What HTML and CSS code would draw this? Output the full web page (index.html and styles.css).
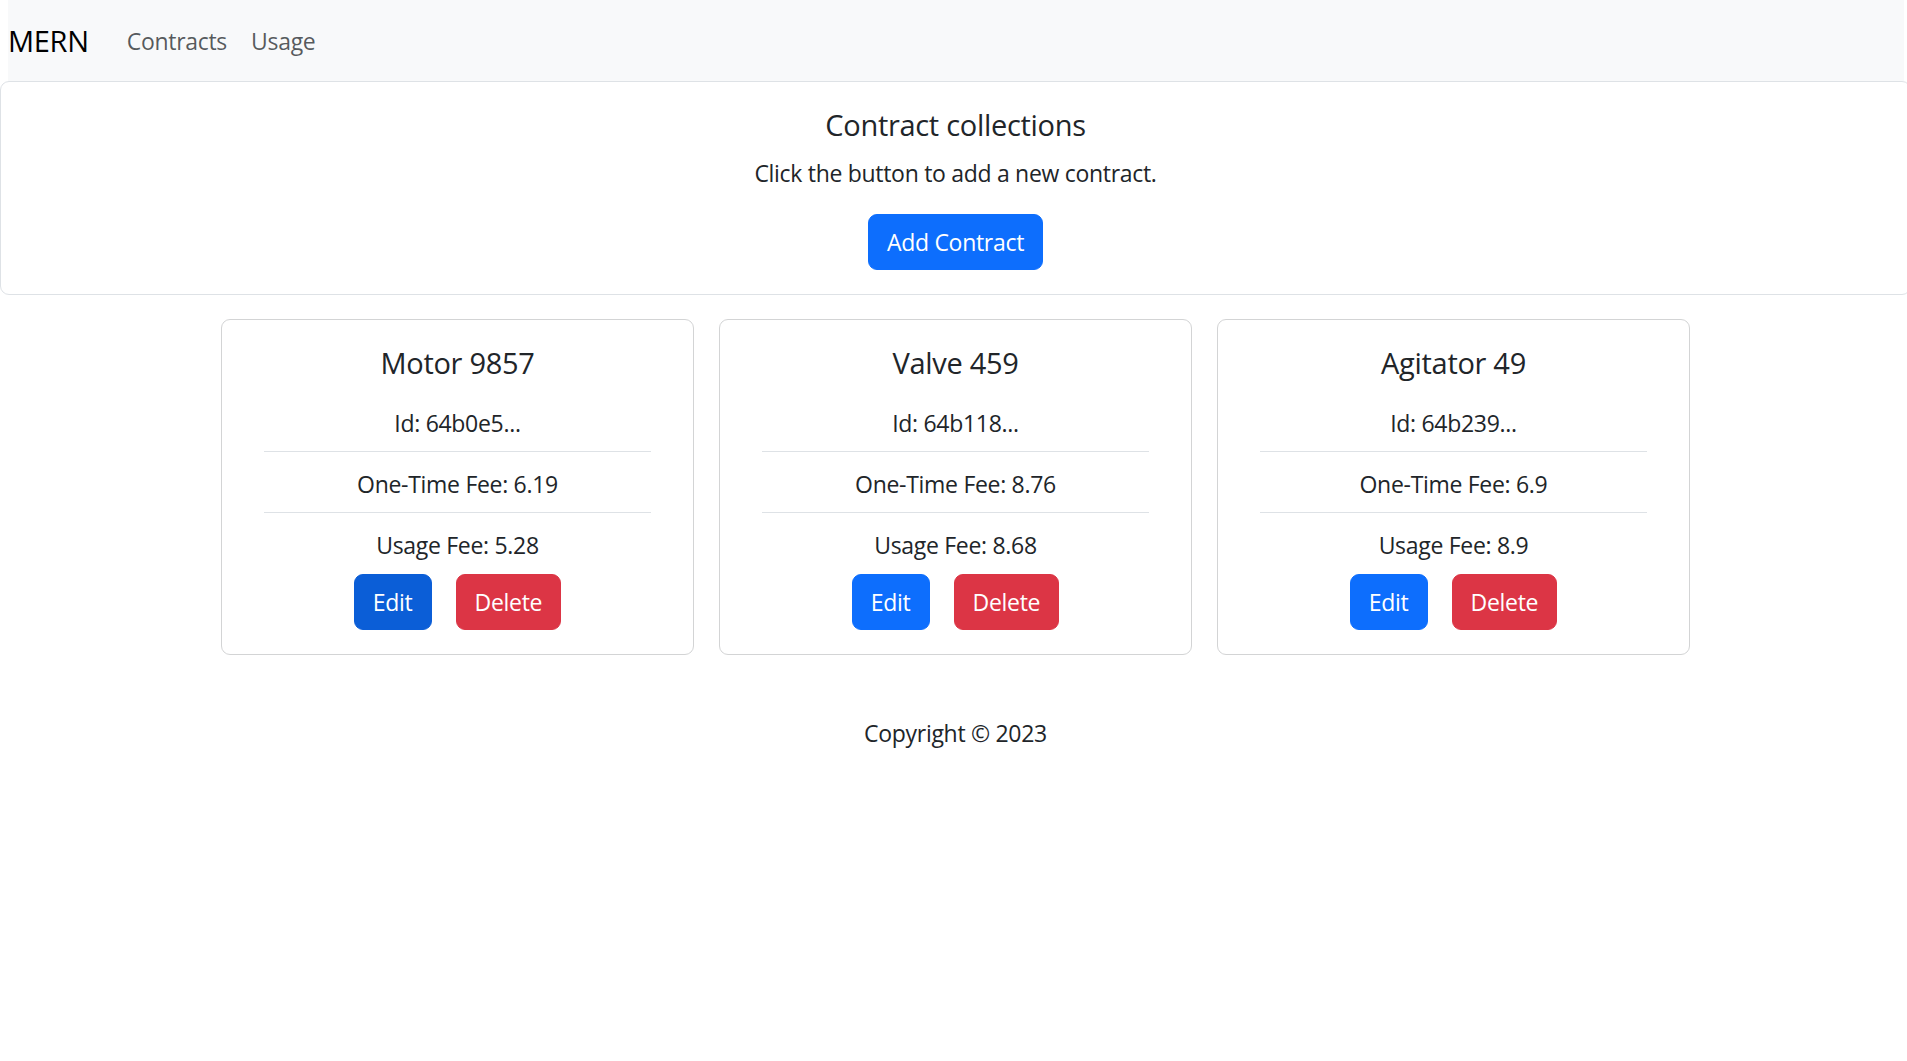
FILE: index.html
```html
<!DOCTYPE html>
<html lang="en">
<head>
<meta charset="utf-8">
<title>MERN</title>
<link rel="stylesheet" href="styles.css">
</head>
<body>
<nav class="navbar">
  <a class="brand" href="#">MERN</a>
  <a class="nav-link" href="#">Contracts</a>
  <a class="nav-link" href="#">Usage</a>
</nav>
<div class="page">
  <section class="hero">
    <h5 class="hero-title">Contract collections</h5>
    <p class="hero-text">Click the button to add a new contract.</p>
    <button class="btn btn-primary">Add Contract</button>
  </section>
  <div class="cards">
    <div class="card">
      <h5 class="card-title">Motor 9857</h5>
      <ul class="list">
        <li class="item">Id: 64b0e5...</li>
        <li class="item">One-Time Fee: 6.19</li>
        <li class="item item-last">Usage Fee: 5.28</li>
      </ul>
      <div class="actions">
        <button class="btn btn-primary btn-hover">Edit</button>
        <button class="btn btn-danger">Delete</button>
      </div>
    </div>
    <div class="card">
      <h5 class="card-title">Valve 459</h5>
      <ul class="list">
        <li class="item">Id: 64b118...</li>
        <li class="item">One-Time Fee: 8.76</li>
        <li class="item item-last">Usage Fee: 8.68</li>
      </ul>
      <div class="actions">
        <button class="btn btn-primary">Edit</button>
        <button class="btn btn-danger">Delete</button>
      </div>
    </div>
    <div class="card">
      <h5 class="card-title">Agitator 49</h5>
      <ul class="list">
        <li class="item">Id: 64b239...</li>
        <li class="item">One-Time Fee: 6.9</li>
        <li class="item item-last">Usage Fee: 8.9</li>
      </ul>
      <div class="actions">
        <button class="btn btn-primary">Edit</button>
        <button class="btn btn-danger">Delete</button>
      </div>
    </div>
  </div>
  <footer class="footer">Copyright © 2023</footer>
</div>
</body>
</html>
```
FILE: styles.css
```css
html, body {
  overflow-x: hidden;
}
body {
  margin: 0;
  font-family: "Open Sans", "Noto Sans", sans-serif;
  font-size: 23px;
  letter-spacing: -0.3px;
  line-height: 36px;
  color: #212529;
  background: #fff;
}
.navbar {
  display: flex;
  align-items: center;
  height: 81px;
  margin: 0 3px 0 8px;
  background: #f8f9fa;
}
.brand {
  font-size: 29px;
  line-height: 45px;
  color: #000;
  text-decoration: none;
  margin-left: 0;
  margin-right: 26px;
}
.nav-link {
  padding: 0 12px;
  color: rgba(33, 37, 41, 0.75);
  text-decoration: none;
}
.page {
  width: calc(100% + 4px);
}
.hero {
  box-sizing: border-box;
  border: 1px solid #dee2e6;
  border-radius: 9px;
  padding: 25px 24px 24px;
  text-align: center;
}
.hero-title, .card-title {
  font-size: 29px;
  line-height: 36px;
  font-weight: 400;
  margin: 0 0 12px;
}
.hero-text {
  margin: 12px 0 23px;
}
.btn {
  font-family: inherit;
  font-size: 23px;
  letter-spacing: -0.3px;
  line-height: 36px;
  padding: 9px 18px;
  border: 1px solid transparent;
  border-radius: 9px;
  color: #fff;
  cursor: pointer;
}
.btn-primary {
  background: #0d6efd;
  border-color: #0d6efd;
}
.btn-hover {
  background: #0b5ed7;
  border-color: #0b5ed7;
}
.btn-danger {
  background: #dc3545;
  border-color: #dc3545;
}
.cards {
  display: flex;
  justify-content: center;
  gap: 25px;
  margin-top: 24px;
}
.card {
  box-sizing: border-box;
  width: 473px;
  border: 1px solid #d3d4d5;
  border-radius: 9px;
  padding: 25px 24px 24px;
  text-align: center;
}
.card-title {
  margin-bottom: 10px;
}
.list {
  list-style: none;
  margin: 0 18px;
  padding: 0;
}
.item {
  padding: 14px 0 10px;
  border-bottom: 1px solid #dee2e6;
}
.item-last {
  border-bottom: none;
  padding-bottom: 0;
}
.actions {
  display: flex;
  justify-content: center;
  gap: 24px;
  margin-top: 11px;
}
.footer {
  margin-top: 60px;
  text-align: center;
}
```
